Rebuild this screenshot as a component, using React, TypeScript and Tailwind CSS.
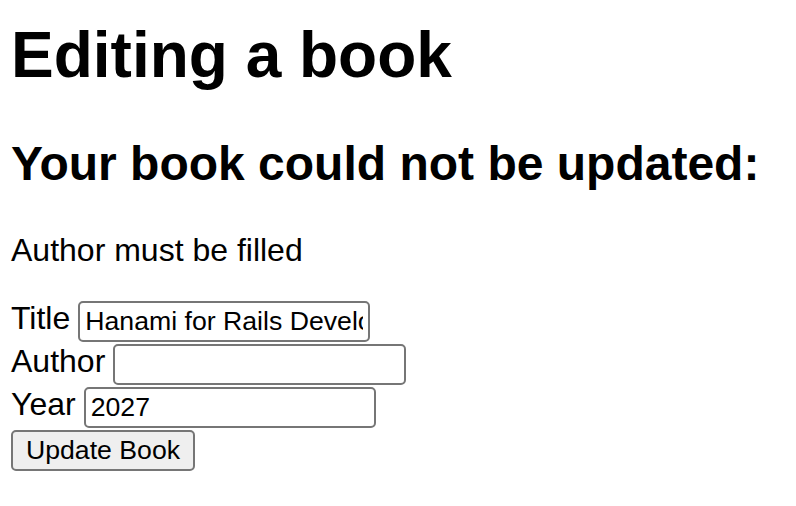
import { useState } from "react";

export default function App() {
  const [title, setTitle] = useState("Hanami for Rails Developers");
  const [author, setAuthor] = useState("");
  const [year, setYear] = useState("2027");

  const errors = ["Author must be filled"];

  return (
    <div className="min-h-screen bg-white text-black pl-[11px] pt-[18px] font-['Liberation_Sans',Arial,Helvetica,sans-serif]">
      <h1 className="text-[64px] leading-[74px] font-bold">Editing a book</h1>

      {errors.length > 0 && (
        <div>
          <h2 className="mt-[44px] text-[48px] leading-[55px] font-bold">
            Your book could not be updated:
          </h2>
          {errors.map((err) => (
            <p key={err} className="mt-[41px] text-[32px] leading-[37px]">
              {err}
            </p>
          ))}
        </div>
      )}

      <form
        className="mt-[31px] flex flex-col"
        onSubmit={(e) => e.preventDefault()}
      >
        {/* Title */}
        <div className="flex items-start gap-[8px] h-[43px]">
          <label htmlFor="title" className="text-[32px] leading-[36px]">
            Title
          </label>
          <input
            id="title"
            type="text"
            value={title}
            onChange={(e) => setTitle(e.target.value)}
            className="mt-[1px] w-[292px] h-[41px] px-[5px] text-[26.67px] border-2 border-[#767676] rounded-[5px] bg-white outline-none"
          />
        </div>

        {/* Author */}
        <div className="flex items-start gap-[8px] h-[43px]">
          <label htmlFor="author" className="text-[32px] leading-[36px]">
            Author
          </label>
          <input
            id="author"
            type="text"
            value={author}
            onChange={(e) => setAuthor(e.target.value)}
            className="mt-[1px] w-[293px] h-[41px] px-[5px] text-[26.67px] border-2 border-[#767676] rounded-[5px] bg-white outline-none"
          />
        </div>

        {/* Year */}
        <div className="flex items-start gap-[8px] h-[43px]">
          <label htmlFor="year" className="text-[32px] leading-[36px]">
            Year
          </label>
          <input
            id="year"
            type="text"
            value={year}
            onChange={(e) => setYear(e.target.value)}
            className="mt-[1px] w-[292px] h-[41px] px-[5px] text-[26.67px] border-2 border-[#767676] rounded-[5px] bg-white outline-none"
          />
        </div>

        <div className="mt-[1px]">
          <button
            type="submit"
            className="w-[184px] h-[41px] px-[12px] text-[26.67px] leading-none bg-[#efefef] border-2 border-[#767676] rounded-[5px]"
          >
            Update Book
          </button>
        </div>
      </form>
    </div>
  );
}
